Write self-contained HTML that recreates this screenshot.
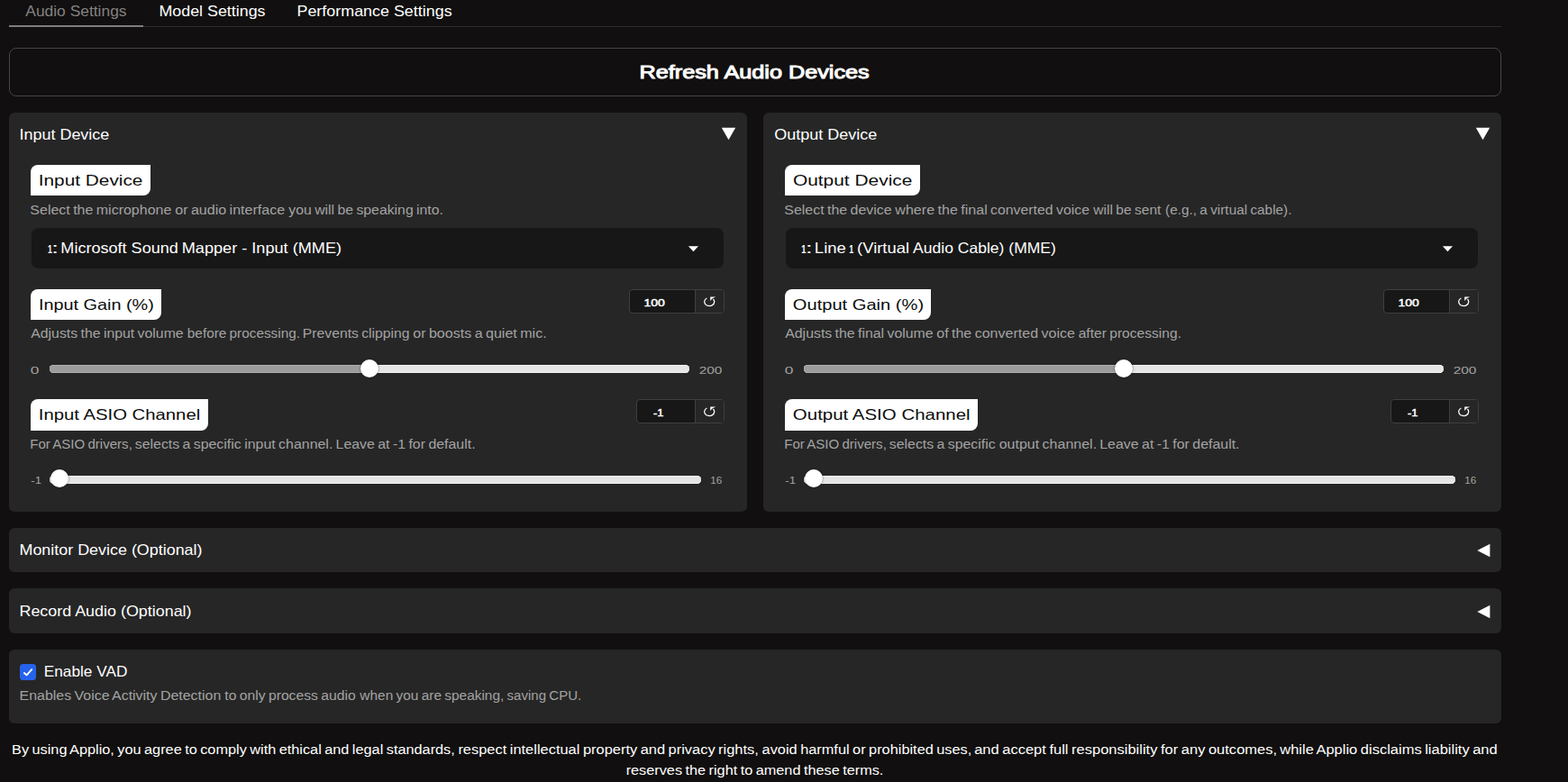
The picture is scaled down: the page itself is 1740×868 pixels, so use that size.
<!DOCTYPE html>
<html lang="en">
<head>
<meta charset="utf-8">
<title>Applio - Realtime - Audio Settings</title>
<style>
html,body{margin:0;padding:0;}
body{width:1740px;height:868px;overflow:hidden;background:#110f0f;font-family:"Liberation Sans",sans-serif;position:relative;color:#fff;}
.t{position:absolute;white-space:nowrap;line-height:1;transform-origin:0 0;display:block;}
.abs{position:absolute;box-sizing:border-box;}
.tabline{left:10px;top:29px;width:1656px;height:1px;background:#2e2d2d;}
.tabsel{left:10px;top:28px;width:149px;height:2px;background:#7e7e7e;}
.refresh{left:10px;top:53px;width:1656px;height:54px;border:1px solid #474646;border-radius:8px;background:#110f0f;}
.panel{background:#262626;border-radius:6px;}
.badge{background:#fff;border-radius:8px 0 8px 0;left:23.9px;}
.b1{top:57.6px;height:34.3px;}
.b2{top:195.6px;height:34.3px;}
.b3{top:317.6px;height:35.5px;}
.dd{background:#171717;border-radius:8px;left:25px;top:128px;width:768px;height:45px;}
.num{left:688px;width:106px;height:27px;border:1px solid #3f3f3f;border-radius:4px;background:#171717;overflow:hidden;}
.num i{position:absolute;right:0;top:0;width:31px;height:25px;background:#262626;border-left:1px solid #3f3f3f;}
.num svg{position:absolute;right:8px;top:6px;}
.track{height:9px;border-radius:4.5px;background:#e5e5e5;overflow:hidden;box-shadow:inset 0 1px 0 #f2f2f2,inset 0 -1px 0 #f2f2f2;}
.track b{display:block;height:9px;background:#9c9c9c;box-shadow:inset 0 1px 0 #adadad,inset 0 -1px 0 #adadad;}
.thumb{width:20px;height:20px;border-radius:50%;background:#fff;box-shadow:0 0 2.5px rgba(0,0,0,.55);}
</style>
</head>
<body>
<div class="abs tabline"></div>
<div class="abs tabsel"></div>
<div class="abs refresh"></div>

<!-- Input panel -->
<div class="abs panel" style="left:10px;top:125px;width:819px;height:443px;">
  <svg class="abs" style="left:790px;top:16px;" width="18" height="16" viewBox="0 0 18 16"><polygon points="0.8,0.8 16.2,0.8 8.5,14.3" fill="#fff"/></svg>
  <div class="abs badge b1" style="width:133.1px;"></div>
  <div class="abs dd"><svg class="abs" style="left:728px;top:20px;" width="14" height="8" viewBox="0 0 14 8"><polygon points="0.9,0.2 12,0.2 6.45,6.2" fill="#fff"/></svg></div>
  <div class="abs badge b2" style="width:145.3px;"></div>
  <div class="abs num" style="top:196px;"><i><svg width="14" height="14" viewBox="0 0 14 14"><path d="M3.4 3 A5.5 4.6 0 1 0 10.4 3.95" fill="none" stroke="#fff" stroke-width="1.25"/><path d="M7.2 1.6 H13.3 Q9 3 7.2 6.1 Z" fill="#fff"/></svg></i></div>
  <div class="abs track" style="left:44.8px;top:280px;width:710.5px;"><b style="width:355px"></b></div>
  <div class="abs thumb" style="left:389.8px;top:274px;"></div>
  <div class="abs badge b3" style="width:197.3px;"></div>
  <div class="abs num" style="top:318px;left:696px;width:98px;"><i><svg width="14" height="14" viewBox="0 0 14 14"><path d="M3.4 3 A5.5 4.6 0 1 0 10.4 3.95" fill="none" stroke="#fff" stroke-width="1.25"/><path d="M7.2 1.6 H13.3 Q9 3 7.2 6.1 Z" fill="#fff"/></svg></i></div>
  <div class="abs track" style="left:44.8px;top:403px;width:723.4px;"></div>
  <div class="abs thumb" style="left:45.7px;top:396px;"></div>
</div>

<!-- Output panel -->
<div class="abs panel" style="left:847px;top:125px;width:819px;height:443px;">
  <svg class="abs" style="left:790px;top:16px;" width="18" height="16" viewBox="0 0 18 16"><polygon points="0.8,0.8 16.2,0.8 8.5,14.3" fill="#fff"/></svg>
  <div class="abs badge b1" style="width:150.3px;"></div>
  <div class="abs dd"><svg class="abs" style="left:728px;top:20px;" width="14" height="8" viewBox="0 0 14 8"><polygon points="0.9,0.2 12,0.2 6.45,6.2" fill="#fff"/></svg></div>
  <div class="abs badge b2" style="width:162.3px;"></div>
  <div class="abs num" style="top:196px;"><i><svg width="14" height="14" viewBox="0 0 14 14"><path d="M3.4 3 A5.5 4.6 0 1 0 10.4 3.95" fill="none" stroke="#fff" stroke-width="1.25"/><path d="M7.2 1.6 H13.3 Q9 3 7.2 6.1 Z" fill="#fff"/></svg></i></div>
  <div class="abs track" style="left:44.8px;top:280px;width:710.5px;"><b style="width:355px"></b></div>
  <div class="abs thumb" style="left:389.8px;top:274px;"></div>
  <div class="abs badge b3" style="width:214.2px;"></div>
  <div class="abs num" style="top:318px;left:696px;width:98px;"><i><svg width="14" height="14" viewBox="0 0 14 14"><path d="M3.4 3 A5.5 4.6 0 1 0 10.4 3.95" fill="none" stroke="#fff" stroke-width="1.25"/><path d="M7.2 1.6 H13.3 Q9 3 7.2 6.1 Z" fill="#fff"/></svg></i></div>
  <div class="abs track" style="left:44.8px;top:403px;width:723.4px;"></div>
  <div class="abs thumb" style="left:45.7px;top:396px;"></div>
</div>

<!-- Accordions -->
<div class="abs panel" style="left:10px;top:586px;width:1656px;height:49px;"><svg class="abs" style="left:1629px;top:17px;" width="16" height="17" viewBox="0 0 16 17"><polygon points="0.3,8 14.4,0.8 14.4,15.3" fill="#fff"/></svg></div>
<div class="abs panel" style="left:10px;top:653px;width:1656px;height:50px;"><svg class="abs" style="left:1629px;top:18px;" width="16" height="17" viewBox="0 0 16 17"><polygon points="0.3,8 14.4,0.8 14.4,15.2" fill="#fff"/></svg></div>

<!-- VAD -->
<div class="abs panel" style="left:10px;top:721px;width:1656px;height:81.6px;">
  <svg class="abs" style="left:12px;top:16px;" width="18" height="18" viewBox="0 0 18 18"><rect x="0" y="0" width="18" height="18" rx="3.5" fill="#2563eb"/><path d="M4.9 10 L7.6 12.3 L13.2 6.1" fill="none" stroke="#fff" stroke-width="1.9" stroke-linecap="round" stroke-linejoin="round"/></svg>
</div>

<span class="t" style="left:28px;top:4px;font-size:17px;color:#828282;transform:translateX(0.28px) scaleX(1.0238)">Audio Settings</span>
<span class="t" style="left:176px;top:4px;font-size:17px;transform:translateX(0.50px) scaleX(1.0491)">Model Settings</span>
<span class="t" style="left:329px;top:4px;font-size:17px;transform:translateX(0.47px) scaleX(1.0530)">Performance Settings</span>
<span class="t" style="left:709px;top:69px;font-size:21px;font-weight:400;-webkit-text-stroke:1.0px currentColor;transform:translateX(0.55px) scaleX(1.2012)">Refresh Audio Devices</span>
<span class="t" style="left:21px;top:141px;font-size:17px;transform:translateX(0.43px) scaleX(1.0572)">Input Device</span>
<span class="t" style="left:42px;top:192px;font-size:16.5px;color:#0c0c0c;transform:translateX(0.76px) scaleX(1.2609)">Input Device</span>
<span class="t" style="left:42px;top:330px;font-size:16.5px;color:#0c0c0c;transform:translateX(0.96px) scaleX(1.2022)">Input Gain (%)</span>
<span class="t" style="left:42px;top:452px;font-size:16.5px;color:#0c0c0c;transform:translateX(0.77px) scaleX(1.2302)">Input ASIO Channel</span>
<span class="t" style="left:714px;top:331px;font-size:11.5px;font-weight:400;-webkit-text-stroke:0.45px currentColor;transform:translateX(0.55px) scaleX(1.2167)">100</span>
<span class="t" style="left:725px;top:453px;font-size:11.5px;font-weight:400;-webkit-text-stroke:0.45px currentColor;transform:translateX(0.07px) scaleX(1.1232)">-1</span>
<span class="t" style="left:33px;top:406px;font-size:11px;color:#a3a3a3;transform:translateX(0.82px) scaleX(1.5724)">0</span>
<span class="t" style="left:775px;top:406px;font-size:11px;color:#a3a3a3;transform:translateX(0.75px) scaleX(1.3982)">200</span>
<span class="t" style="left:34px;top:528px;font-size:11px;color:#a3a3a3;transform:translateX(0.25px) scaleX(1.2086)">-1</span>
<span class="t" style="left:788px;top:528px;font-size:11px;color:#a3a3a3;transform:translateX(0.27px) scaleX(1.0584)">16</span>
<span class="t" style="left:859px;top:141px;font-size:17px;transform:translateX(0.28px) scaleX(1.0584)">Output Device</span>
<span class="t" style="left:879px;top:192px;font-size:16.5px;color:#0c0c0c;transform:translateX(0.88px) scaleX(1.2679)">Output Device</span>
<span class="t" style="left:879px;top:330px;font-size:16.5px;color:#0c0c0c;transform:translateX(0.84px) scaleX(1.2184)">Output Gain (%)</span>
<span class="t" style="left:879px;top:452px;font-size:16.5px;color:#0c0c0c;transform:translateX(0.83px) scaleX(1.2401)">Output ASIO Channel</span>
<span class="t" style="left:1551px;top:331px;font-size:11.5px;font-weight:400;-webkit-text-stroke:0.45px currentColor;transform:translateX(0.55px) scaleX(1.2167)">100</span>
<span class="t" style="left:1562px;top:453px;font-size:11.5px;font-weight:400;-webkit-text-stroke:0.45px currentColor;transform:translateX(0.07px) scaleX(1.1232)">-1</span>
<span class="t" style="left:870px;top:406px;font-size:11px;color:#a3a3a3;transform:translateX(0.82px) scaleX(1.5724)">0</span>
<span class="t" style="left:1612px;top:406px;font-size:11px;color:#a3a3a3;transform:translateX(0.75px) scaleX(1.3982)">200</span>
<span class="t" style="left:871px;top:528px;font-size:11px;color:#a3a3a3;transform:translateX(0.25px) scaleX(1.2086)">-1</span>
<span class="t" style="left:1625px;top:528px;font-size:11px;color:#a3a3a3;transform:translateX(0.27px) scaleX(1.0584)">16</span>
<span class="t" style="left:52px;top:271px;font-size:12.8px;font-weight:700;transform:translateX(0.91px) scaleX(0.6990)">1</span>
<span class="t" style="left:56px;top:267px;font-size:16.5px;transform:translateX(0.98px) scaleX(1.7841)">:</span>
<span class="t" style="left:67px;top:267px;font-size:16.5px;transform:translateX(0.37px) scaleX(1.0940)">Microsoft Sound</span>
<span class="t" style="left:201px;top:267px;font-size:16.5px;transform:translateX(0.71px) scaleX(1.0992)">Mapper - Input (MME)</span>
<span class="t" style="left:889px;top:271px;font-size:12.8px;font-weight:700;transform:translateX(0.36px) scaleX(0.7306)">1</span>
<span class="t" style="left:893px;top:267px;font-size:16.5px;transform:translateX(0.76px) scaleX(1.7797)">:</span>
<span class="t" style="left:903px;top:267px;font-size:16.5px;transform:translateX(0.87px) scaleX(1.1215)">Line</span>
<span class="t" style="left:942px;top:271px;font-size:12.8px;font-weight:700;transform:translateX(0.32px) scaleX(0.6980)">1</span>
<span class="t" style="left:951px;top:267px;font-size:16.5px;transform:translateX(0.10px) scaleX(1.1140)">(Virtual</span>
<span class="t" style="left:1013px;top:267px;font-size:16.5px;transform:translateX(0.09px) scaleX(1.0625)">Audio Cable) (MME)</span>
<span class="t" style="left:33px;top:225px;font-size:15.5px;color:#a3a3a3;word-spacing:-1.0px;transform:translateX(0.33px) scaleX(1.0312)">Select the microphone</span>
<span class="t" style="left:194px;top:225px;font-size:15.5px;color:#a3a3a3;word-spacing:-1.0px;transform:translateX(0.21px) scaleX(1.0357)">or audio interface</span>
<span class="t" style="left:320px;top:225px;font-size:15.5px;color:#a3a3a3;word-spacing:-1.0px;transform:translateX(0.30px) scaleX(1.0197)">you will be speaking into.</span>
<span class="t" style="left:34px;top:362px;font-size:15.5px;color:#a3a3a3;word-spacing:-1.0px;transform:translateX(0.20px) scaleX(1.0217)">Adjusts the input volume</span>
<span class="t" style="left:207px;top:362px;font-size:15.5px;color:#a3a3a3;word-spacing:-1.0px;transform:translateX(0.84px) scaleX(0.9889)">before processing.</span>
<span class="t" style="left:335px;top:362px;font-size:15.5px;color:#a3a3a3;word-spacing:-1.0px;transform:translateX(0.81px) scaleX(1.0149)">Prevents clipping</span>
<span class="t" style="left:458px;top:362px;font-size:15.5px;color:#a3a3a3;word-spacing:-1.0px;transform:translateX(0.21px) scaleX(1.0357)">or boosts a quiet mic.</span>
<span class="t" style="left:33px;top:485px;font-size:15.5px;color:#a3a3a3;word-spacing:-1.0px;transform:translateX(0.27px) scaleX(0.9716)">For ASIO drivers,</span>
<span class="t" style="left:149px;top:485px;font-size:15.5px;color:#a3a3a3;word-spacing:-1.0px;transform:translateX(0.79px) scaleX(1.0231)">selects a specific</span>
<span class="t" style="left:271px;top:485px;font-size:15.5px;color:#a3a3a3;word-spacing:-1.0px;transform:translateX(0.19px) scaleX(1.0274)">input channel.</span>
<span class="t" style="left:372px;top:485px;font-size:15.5px;color:#a3a3a3;word-spacing:-1.0px;transform:translateX(0.54px) scaleX(1.0259)">Leave at -1 for default.</span>
<span class="t" style="left:870px;top:225px;font-size:15.5px;color:#a3a3a3;word-spacing:-1.0px;transform:translateX(0.32px) scaleX(1.0278)">Select the device</span>
<span class="t" style="left:993px;top:225px;font-size:15.5px;color:#a3a3a3;word-spacing:-1.0px;transform:translateX(0.28px) scaleX(1.0376)">where the final</span>
<span class="t" style="left:1099px;top:225px;font-size:15.5px;color:#a3a3a3;word-spacing:-1.0px;transform:translateX(0.07px) scaleX(1.0218)">converted voice</span>
<span class="t" style="left:1213px;top:225px;font-size:15.5px;color:#a3a3a3;word-spacing:-1.0px;transform:translateX(0.35px) scaleX(1.0047)">will be sent</span>
<span class="t" style="left:1293px;top:225px;font-size:15.5px;color:#a3a3a3;word-spacing:-1.0px;transform:translateX(0.11px) scaleX(0.9902)">(e.g., a virtual cable).</span>
<span class="t" style="left:871px;top:362px;font-size:15.5px;color:#a3a3a3;word-spacing:-1.0px;transform:translateX(0.21px) scaleX(1.0232)">Adjusts the final volume</span>
<span class="t" style="left:1039px;top:362px;font-size:15.5px;color:#a3a3a3;word-spacing:-1.0px;transform:translateX(0.23px) scaleX(1.0335)">of the converted voice</span>
<span class="t" style="left:1196px;top:362px;font-size:15.5px;color:#a3a3a3;word-spacing:-1.0px;transform:translateX(0.68px) scaleX(1.0063)">after processing.</span>
<span class="t" style="left:870px;top:485px;font-size:15.5px;color:#a3a3a3;word-spacing:-1.0px;transform:translateX(0.27px) scaleX(0.9716)">For ASIO drivers,</span>
<span class="t" style="left:986px;top:485px;font-size:15.5px;color:#a3a3a3;word-spacing:-1.0px;transform:translateX(0.79px) scaleX(1.0231)">selects a specific</span>
<span class="t" style="left:1108px;top:485px;font-size:15.5px;color:#a3a3a3;word-spacing:-1.0px;transform:translateX(0.68px) scaleX(1.0324)">output channel.</span>
<span class="t" style="left:1220px;top:485px;font-size:15.5px;color:#a3a3a3;word-spacing:-1.0px;transform:translateX(0.21px) scaleX(1.0280)">Leave at -1 for default.</span>
<span class="t" style="left:21px;top:602px;font-size:17px;transform:translateX(0.47px) scaleX(1.0535)">Monitor Device (Optional)</span>
<span class="t" style="left:21px;top:670px;font-size:17px;transform:translateX(0.46px) scaleX(1.0533)">Record Audio (Optional)</span>
<span class="t" style="left:48px;top:737px;font-size:16.5px;transform:translateX(0.79px) scaleX(1.0443)">Enable VAD</span>
<span class="t" style="left:21px;top:764px;font-size:15.5px;color:#a3a3a3;word-spacing:-1.0px;transform:translateX(0.52px) scaleX(1.0284)">Enables Voice Activity Detection</span>
<span class="t" style="left:249px;top:764px;font-size:15.5px;color:#a3a3a3;word-spacing:-1.0px;transform:translateX(0.35px) scaleX(1.0125)">to only process audio</span>
<span class="t" style="left:399px;top:764px;font-size:15.5px;color:#a3a3a3;word-spacing:-1.0px;transform:translateX(0.34px) scaleX(0.9953)">when you are speaking,</span>
<span class="t" style="left:562px;top:764px;font-size:15.5px;color:#a3a3a3;word-spacing:-1.0px;transform:translateX(0.60px) scaleX(0.9704)">saving CPU.</span>
<span class="t" style="left:13px;top:824px;font-size:15.5px;word-spacing:-1.0px;transform:translateX(0.08px) scaleX(1.0505)">By using Applio, you agree to comply with ethical and legal standards,</span>
<span class="t" style="left:508px;top:824px;font-size:15.5px;word-spacing:-1.0px;transform:translateX(0.38px) scaleX(1.0599)">respect intellectual property and privacy rights,</span>
<span class="t" style="left:845px;top:824px;font-size:15.5px;word-spacing:-1.0px;transform:translateX(0.62px) scaleX(1.0535)">avoid harmful or prohibited uses,</span>
<span class="t" style="left:1081px;top:824px;font-size:15.5px;word-spacing:-1.0px;transform:translateX(0.14px) scaleX(1.0653)">and accept full responsibility for any outcomes,</span>
<span class="t" style="left:1420px;top:824px;font-size:15.5px;word-spacing:-1.0px;transform:translateX(0.26px) scaleX(1.0640)">while Applio disclaims liability and</span>
<span class="t" style="left:694px;top:847px;font-size:15.5px;word-spacing:-1.0px;transform:translateX(0.64px) scaleX(1.0495)">reserves the right to amend these terms.</span>
</body>
</html>
